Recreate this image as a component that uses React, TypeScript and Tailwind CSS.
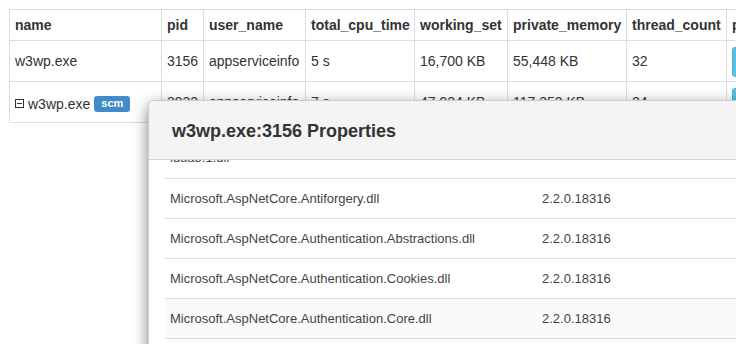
import { Fragment } from 'react';

const processes = [
  {
    name: 'w3wp.exe',
    pid: '3156',
    user: 'appserviceinfo',
    cpu: '5 s',
    workingSet: '16,700 KB',
    privateMemory: '55,448 KB',
    threads: '32',
    scm: false,
  },
  {
    name: 'w3wp.exe',
    pid: '3932',
    user: 'appserviceinfo',
    cpu: '7 s',
    workingSet: '47,924 KB',
    privateMemory: '117,352 KB',
    threads: '24',
    scm: true,
  },
];

const modules = [
  { name: 'ldua5.1.dll', version: '' },
  { name: 'Microsoft.AspNetCore.Antiforgery.dll', version: '2.2.0.18316' },
  { name: 'Microsoft.AspNetCore.Authentication.Abstractions.dll', version: '2.2.0.18316' },
  { name: 'Microsoft.AspNetCore.Authentication.Cookies.dll', version: '2.2.0.18316' },
  { name: 'Microsoft.AspNetCore.Authentication.Core.dll', version: '2.2.0.18316' },
  { name: 'Microsoft.AspNetCore.Authentication.dll', version: '2.2.0.18316' },
];

const th = 'border border-[#ddd] px-[5px] text-left font-bold text-[14px] text-[#333] whitespace-nowrap';
const td = 'border border-[#ddd] px-[5px] text-[14px] text-[#333] whitespace-nowrap';

function CollapseIcon() {
  return (
    <span className="inline-flex w-[9px] h-[9px] border border-[#333] items-center justify-center mr-[4px] mb-[1px]">
      <span className="block w-[5px] h-px bg-[#333]" />
    </span>
  );
}

export default function App() {
  return (
    <div
      className="relative w-[736px] h-[344px] overflow-hidden bg-white"
      style={{ fontFamily: '"Liberation Sans", Arial, sans-serif' }}
    >
      <div className="pt-[9px] pl-[9px]">
        <table className="table-fixed border-collapse w-[800px]">
          <colgroup>
            <col className="w-[152px]" />
            <col className="w-[42px]" />
            <col className="w-[102px]" />
            <col className="w-[109px]" />
            <col className="w-[93px]" />
            <col className="w-[119px]" />
            <col className="w-[100px]" />
            <col className="w-[83px]" />
          </colgroup>
          <thead>
            <tr className="h-[31px]">
              <th className={th}>name</th>
              <th className={th}>pid</th>
              <th className={th}>user_name</th>
              <th className={th}>total_cpu_time</th>
              <th className={th}>working_set</th>
              <th className={th}>private_memory</th>
              <th className={th}>thread_count</th>
              <th className={th}>properties</th>
            </tr>
          </thead>
          <tbody>
            {processes.map((p) => (
              <tr key={p.pid} className="h-[41px]">
                <td className={td}>
                  <span className="inline-flex items-center">
                    {p.scm && <CollapseIcon />}
                    {p.name}
                    {p.scm && (
                      <span className="ml-[4px] rounded-[3px] bg-[#428bca] text-white text-[11px] font-bold leading-none px-[7px] pt-[2px] pb-[3px]">
                        scm
                      </span>
                    )}
                  </span>
                </td>
                <td className={td}>{p.pid}</td>
                <td className={td}>{p.user}</td>
                <td className={td}>{p.cpu}</td>
                <td className={td}>{p.workingSet}</td>
                <td className={td}>{p.privateMemory}</td>
                <td className={td}>{p.threads}</td>
                <td className={td}>
                  <button className="h-[30px] mt-[2px] px-[10px] rounded-[3px] bg-[#5bc0de] border border-[#46b8da] text-white text-[12px]">
                    properties
                  </button>
                </td>
              </tr>
            ))}
          </tbody>
        </table>
      </div>

      {/* properties modal */}
      <div className="absolute left-[148px] top-[100px] w-[640px] h-[300px] bg-white rounded-tl-[6px] border border-black/20 shadow-[0_5px_15px_rgba(0,0,0,0.5)] overflow-hidden">
        <div className="h-[59px] bg-[#f4f4f4] border-b border-[#d4d4d4] flex items-center pl-[23px] pt-[3px]">
          <h4 className="text-[18px] font-bold text-[#333]">w3wp.exe:3156 Properties</h4>
        </div>
        <div className="h-[240px] overflow-hidden px-[16px]">
          <div className="-mt-[22px]">
            {modules.map((m, i) => (
              <Fragment key={m.name}>
                <div
                  className={
                    'h-[40px] flex items-center text-[13px] text-[#444] ' +
                    (i > 0 ? 'border-t border-[#ddd] ' : '') +
                    (i === 4 ? 'bg-[#fafafa]' : '')
                  }
                >
                  <span className="w-[377px] pl-[5px] whitespace-nowrap">{m.name}</span>
                  <span>{m.version}</span>
                </div>
              </Fragment>
            ))}
          </div>
        </div>
      </div>
    </div>
  );
}
